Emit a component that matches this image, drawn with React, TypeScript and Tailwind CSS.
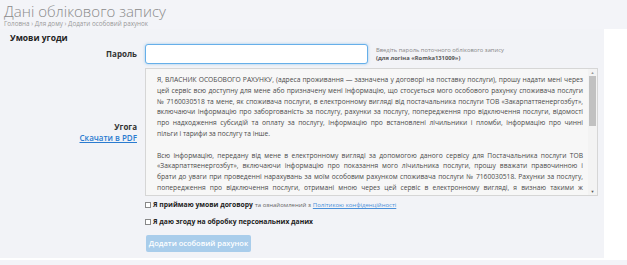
import React from 'react';

const p1 =
  'Я, ВЛАСНИК ОСОБОВОГО РАХУНКУ, (адреса проживання — зазначена у договорі на поставку послуги), прошу надати мені через цей сервіс всю доступну для мене або призначену мені інформацію, що стосується мого особового рахунку споживача послуги №\u00a07160030518 та мене, як споживача послуги, в електронному вигляді від постачальника послуги ТОВ «Закарпаттяенергозбут», включаючи інформацію про заборгованість за послугу, рахунки за послугу, попередження про відключення послуги, відомості про надходження субсидій та оплату за послугу, інформацію про встановлені лічильники і пломби, інформацію про чинні пільги\u00a0і\u00a0тарифи за послугу та інше.';

const p2 =
  'Всю інформацію, передану від мене в електронному вигляді за допомогою даного сервісу для Постачальника послуги ТОВ «Закарпаттяенергозбут», включаючи інформацію про показання мого лічильника послуги, прошу вважати правочинною і брати\u00a0до уваги при проведенні нарахувань за моїм особовим рахунком споживача послуги №\u00a07160030518. Рахунки за послугу, попередження про відключення послуги, отримані мною через цей сервіс в електронному вигляді, я визнаю такими ж правочинними як і паперові рахунки за послугу і попередженнями про відключення послуги. Я самостійно забезпечую конфіденційність своїх облікових даних для доступу до сервісу.';

export default function App() {
  return (
    <div className="w-[627px] h-[265px] overflow-hidden bg-white font-['Open_Sans',sans-serif] text-[#333]">
      {/* Header */}
      <div className="h-[29px] bg-[#f3f4f8] pl-[4px] pt-[2px]">
        <h1 className="text-[15px] leading-[19px] font-light text-[#8a8a8a]">Дані облікового запису</h1>
        <p className="text-[6.3px] leading-[6px] text-[#999]">Головна › Для дому › Додати особовий рахунок</p>
      </div>

      <div className="flex">
        <div className="w-[604px] h-[229px] bg-[#f2f3f7] pt-[3px]">
          <h2 className="pl-[10px] text-[8.5px] leading-[12px] font-bold text-[#222]">Умови угоди</h2>

          {/* Password */}
          <div className="flex items-center">
            <label className="w-[137px] text-right text-[8px] font-bold text-[#333]">Пароль</label>
            <input
              className="ml-[8px] w-[223px] h-[20px] rounded-[3px] border border-[#66afe9] bg-white px-[5px] text-[8px] outline-none shadow-[0_0_3px_rgba(102,175,233,0.6)]"
              defaultValue=""
            />
            <div className="ml-[8px] text-[5.8px] leading-[8.5px] text-[#888]">
              <p>Введіть пароль поточного облікового запису</p>
              <p className="font-bold text-[#555]">(для логіна «Romka131009»)</p>
            </div>
          </div>

          {/* Agreement */}
          <div className="flex mt-[4px]">
            <div className="w-[137px] flex flex-col items-end justify-center text-[8px] leading-[11px]">
              <span className="font-bold">Угога</span>
              <a className="text-[#2a7bd0] underline font-semibold">Скачати в PDF</a>
            </div>
            <div className="ml-[8px] w-[453px] h-[128px] border border-[#d6d6d6] bg-[#f7f7f7] flex">
              <div className="flex-1 overflow-hidden pl-[11px] pr-[5px] pt-[6px] text-[6.7px] leading-[10.8px] text-[#4a4a4a] text-justify">
                <p>{p1}</p>
                <p className="mt-[10.8px]">{p2}</p>
              </div>
              <div className="w-[9px] flex flex-col items-center bg-[#f3f3f3]">
                <span className="text-[4px] leading-[7px] text-[#999]">▲</span>
                <div className="w-[7px] h-[50px] bg-[#c1c1c1]" />
                <div className="flex-1" />
                <span className="text-[4px] leading-[7px] text-[#555]">▼</span>
              </div>
            </div>
          </div>

          {/* Checkboxes */}
          <div className="ml-[145px] mt-[3px] h-[12px] flex items-center leading-[12px]">
            <span className="w-[6px] h-[6px] border border-[#888] bg-white mr-[2px]" />
            <span className="text-[6.8px] font-bold text-[#222]">Я приймаю умови договору</span>
            <span className="ml-[2px] text-[6px] text-[#666]">та ознайомлений з</span>
            <a className="ml-[2px] text-[6px] text-[#4a90d9] underline">Політикою конфіденційності</a>
          </div>
          <div className="ml-[145px] mt-[5px] h-[12px] flex items-center leading-[12px]">
            <span className="w-[6px] h-[6px] border border-[#888] bg-white mr-[2px]" />
            <span className="text-[6.8px] font-bold text-[#222]">Я даю згоду на обробку персональних даних</span>
          </div>

          <button className="ml-[146px] mt-[3px] w-[105px] h-[17px] rounded-[2px] bg-[#a9cdeb] text-white text-[7.5px] font-semibold">
            Додати особовий рахунок
          </button>
        </div>
        <div className="flex-1 bg-white" />
      </div>

      <div className="h-[2px] bg-white" />
      <div className="h-[10px] bg-[#f3f4f8]" />
    </div>
  );
}
